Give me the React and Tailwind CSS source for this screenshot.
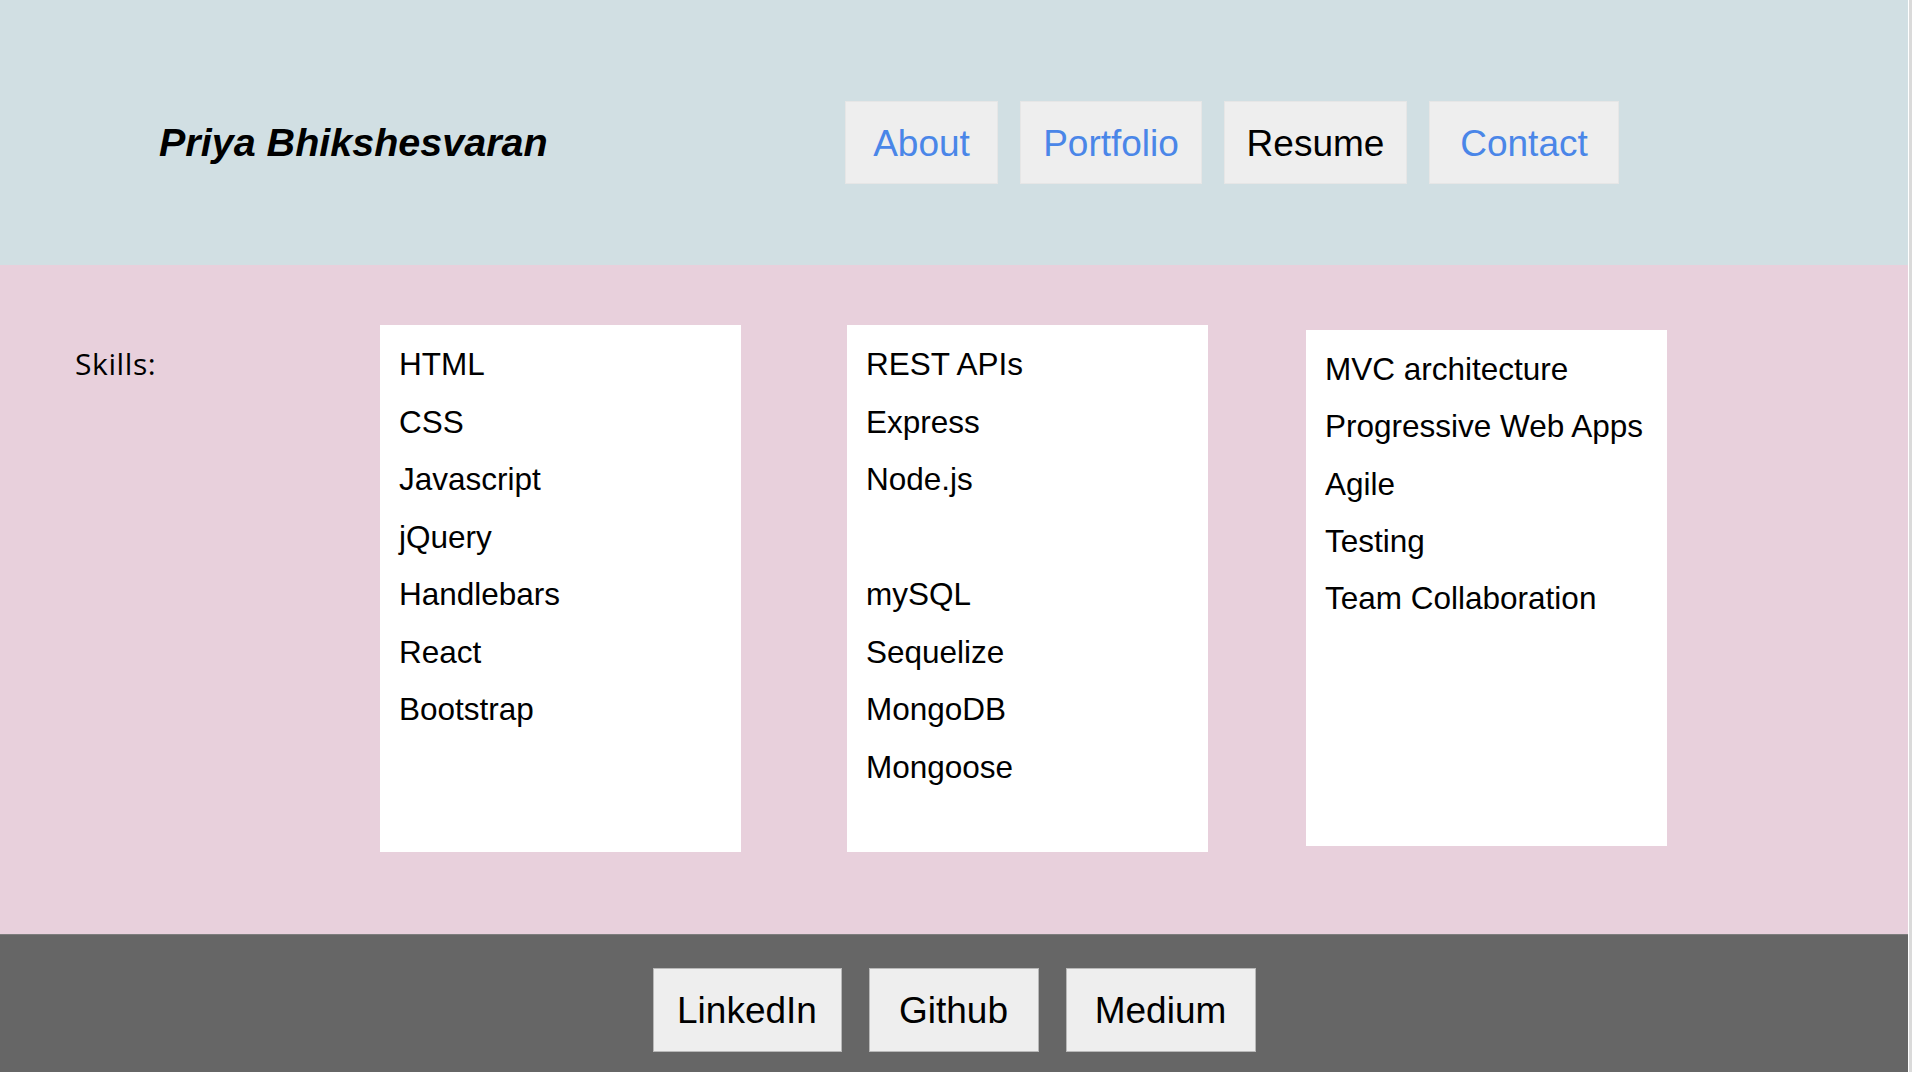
const navLinks = [
  { label: 'About', width: 'w-[153px]', active: false },
  { label: 'Portfolio', width: 'w-[182px]', active: false },
  { label: 'Resume', width: 'w-[183px]', active: true },
  { label: 'Contact', width: 'w-[190px]', active: false },
]

const skillColumns = [
  {
    items: ['HTML', 'CSS', 'Javascript', 'jQuery', 'Handlebars', 'React', 'Bootstrap'],
    box: 'h-[527px] pt-[11px] leading-[57.5px]',
  },
  {
    items: ['REST APIs', 'Express', 'Node.js', '', 'mySQL', 'Sequelize', 'MongoDB', 'Mongoose'],
    box: 'ml-[106px] h-[527px] pt-[11px] leading-[57.5px]',
  },
  {
    items: ['MVC architecture', 'Progressive Web Apps', 'Agile', 'Testing', 'Team Collaboration'],
    box: 'ml-[98px] mt-[5px] h-[516px] pt-[11px] leading-[57.3px]',
  },
]

const socialLinks = [
  { label: 'LinkedIn', width: 'w-[189px]' },
  { label: 'Github', width: 'w-[170px]' },
  { label: 'Medium', width: 'w-[190px]' },
]

const App = () => {
  return (
    <div className="flex w-[1912px] h-[1072px] overflow-hidden font-['Liberation_Sans',Arial,sans-serif] text-black">
      <div className="flex flex-col w-[1908px]">
        {/* Header */}
        <header className="h-[265px] pt-[20px] bg-[#d1dfe3] flex items-center">
          <h1 className="w-[845px] pl-[159px] pt-[1px] text-[39.5px] leading-none font-bold italic">
            Priya Bhikshesvaran
          </h1>
          <nav className="flex gap-[22px]">
            {navLinks.map(link => (
              <a
                key={link.label}
                className={`${link.width} h-[83px] pt-[2px] flex items-center justify-center bg-[#eeeeee] border border-[#e6e6e6] text-[37px] leading-none ${link.active ? 'text-black' : 'text-[#4a86e8]'}`}
              >
                {link.label}
              </a>
            ))}
          </nav>
        </header>

        {/* Skills */}
        <main className="flex-1 bg-[#e8d0dc] pt-[60px] flex items-start">
          <div className="w-[380px] pl-[75px] pt-[10px] font-['Open_Sans',sans-serif] text-[30px] leading-[57px] tracking-[0.6px]">
            Skills:
          </div>
          {skillColumns.map((col, i) => (
            <ul key={i} className={`w-[361px] bg-white pl-[19px] text-[31.5px] ${col.box}`}>
              {col.items.map((item, j) => (
                <li key={j}>{item || '\u00a0'}</li>
              ))}
            </ul>
          ))}
        </main>

        {/* Footer */}
        <footer className="h-[138px] bg-[#666666] border-t border-[#7d7d7d] pt-[33px] flex justify-center gap-[27px]">
          {socialLinks.map(link => (
            <a
              key={link.label}
              className={`${link.width} h-[84px] pt-[1px] flex items-center justify-center bg-[#eeeeee] border border-[#b8b8b8] text-[37px] leading-none`}
            >
              {link.label}
            </a>
          ))}
        </footer>
      </div>
      <div className="w-[4px] border-l border-white bg-[#dadada]" />
    </div>
  )
}

export default App
